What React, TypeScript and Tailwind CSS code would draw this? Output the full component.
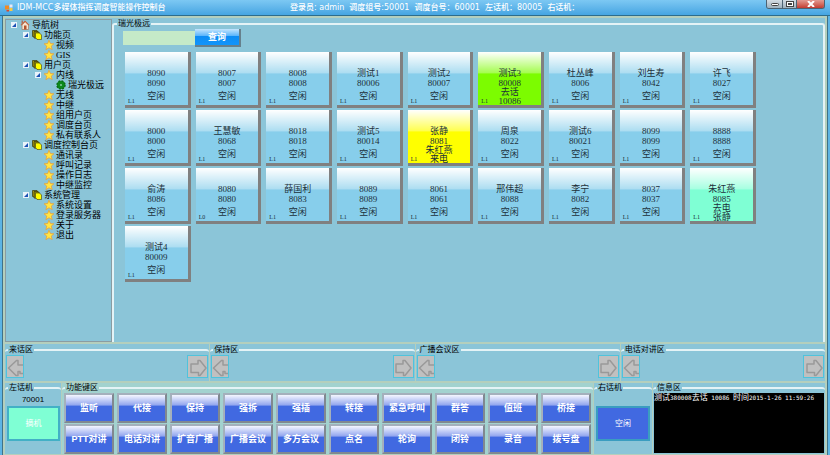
import React, { useState } from 'react';
import clsx from 'clsx';

type Status = 'idle' | 'calling' | 'ringing' | 'outgoing';

interface Extension {
    name: string;
    number: string;
    line?: string;
    status?: Status;
    state?: string[];
}

interface TreeNode {
    label: string;
    depth: number;
    icon: 'home' | 'page' | 'star' | 'gear';
    open?: boolean;
}

const tree: TreeNode[] = [
    { label: '导航树', depth: 0, icon: 'home', open: true },
    { label: '功能页', depth: 1, icon: 'page', open: true },
    { label: '视频', depth: 2, icon: 'star' },
    { label: 'GIS', depth: 2, icon: 'star' },
    { label: '用户页', depth: 1, icon: 'page', open: true },
    { label: '内线', depth: 2, icon: 'star', open: true },
    { label: '瑞光极远', depth: 3, icon: 'gear' },
    { label: '无线', depth: 2, icon: 'star' },
    { label: '中继', depth: 2, icon: 'star' },
    { label: '组用户页', depth: 2, icon: 'star' },
    { label: '调度台页', depth: 2, icon: 'star' },
    { label: '私有联系人', depth: 2, icon: 'star' },
    { label: '调度控制台页', depth: 1, icon: 'page', open: true },
    { label: '通讯录', depth: 2, icon: 'star' },
    { label: '呼叫记录', depth: 2, icon: 'star' },
    { label: '操作日志', depth: 2, icon: 'star' },
    { label: '中继监控', depth: 2, icon: 'star' },
    { label: '系统管理', depth: 1, icon: 'page', open: true },
    { label: '系统设置', depth: 2, icon: 'star' },
    { label: '登录服务器', depth: 2, icon: 'star' },
    { label: '关于', depth: 2, icon: 'star' },
    { label: '退出', depth: 2, icon: 'star' },
];

const extensions: Extension[] = [
    { name: '8090', number: '8090' },
    { name: '8007', number: '8007' },
    { name: '8008', number: '8008' },
    { name: '测试1', number: '80006' },
    { name: '测试2', number: '80007' },
    { name: '测试3', number: '80008', status: 'calling', state: ['去话', '10086'] },
    { name: '杜丛峰', number: '8006' },
    { name: '刘生寿', number: '8042' },
    { name: '许飞', number: '8027' },
    { name: '8000', number: '8000' },
    { name: '王慧敏', number: '8068' },
    { name: '8018', number: '8018' },
    { name: '测试5', number: '80014' },
    { name: '张静', number: '8081', status: 'ringing', state: ['朱红燕', '来电'] },
    { name: '周泉', number: '8022' },
    { name: '测试6', number: '80021' },
    { name: '8099', number: '8099' },
    { name: '8888', number: '8888' },
    { name: '俞涛', number: '8086' },
    { name: '8080', number: '8080', line: 'L0' },
    { name: '薛国利', number: '8083' },
    { name: '8089', number: '8089' },
    { name: '8061', number: '8061' },
    { name: '邢伟超', number: '8088' },
    { name: '李宁', number: '8082' },
    { name: '8037', number: '8037' },
    { name: '朱红燕', number: '8085', status: 'outgoing', state: ['去电', '张静'] },
    { name: '测试4', number: '80009' },
];

const functionKeys = [
    '监听', '代接', '保持', '强拆', '强插', '转接', '紧急呼叫', '群答', '值班', '桥接',
    'PTT对讲', '电话对讲', '扩音广播', '广播会议', '多方会议', '点名', '轮询', '闭铃', '录音', '拨号盘',
];

const indent = ['pl-[5px]', 'pl-[17px]', 'pl-[29px]', 'pl-[41px]'];

const statusColor: Record<Status, string> = {
    idle: 'bg-[#87ceeb]',
    calling: 'bg-[#7cfc00]',
    ringing: 'bg-[#ffff00]',
    outgoing: 'bg-[#7fffd4]',
};

function TreeIcon({ icon }: { icon: TreeNode['icon'] }) {
    return (
        <svg viewBox="0 0 20 20" className="h-[10px] w-[10px] shrink-0" aria-hidden="true">
            {icon === 'home' && (
                <>
                    <path d="M4 9v10h13V9l-6-6z" fill="#f6e4d0" stroke="#a4826a" strokeWidth="1.5" />
                    <path d="M1 10 10 1l9 9-2 1-7-7-7 7z" fill="#c4623c" />
                    <path d="M3 1h3v5L3 8z" fill="#b0705a" />
                    <path d="M8 11h5v8H8z" fill="#b4532c" />
                </>
            )}
            {icon === 'page' && (
                <>
                    <path d="M1 1h9l3 4v10L1 13z" fill="#b8ae10" stroke="#3c3a10" strokeWidth="1.5" />
                    <path d="M4 3h8l3 3v11l-11-1z" fill="#8a8410" stroke="#3c3a10" strokeWidth="1.5" />
                    <path d="M7 6h8l4 4v9H10l-3-4z" fill="#ffff00" stroke="#3c3a10" strokeWidth="1.2" />
                </>
            )}
            {icon === 'star' && (
                <path
                    d="M10 .5 12.800 7l7 .6-5.300 4.600 1.700 7L10 15.500l-6.200 3.700 1.700-7L.2 7.600l7-.6z"
                    fill="#ffe545"
                    stroke="#f09a28"
                    strokeWidth="1.300"
                />
            )}
            {icon === 'gear' && (
                <>
                    <circle cx="10" cy="10" r="8" fill="#0c8a1c" />
                    <circle cx="10" cy="10" r="8" fill="none" stroke="#0a6e16" strokeWidth="3" strokeDasharray="4 2.280" />
                    <circle cx="10" cy="10" r="2.200" fill="#7fc49a" />
                </>
            )}
        </svg>
    );
}

function Arrow({ dir, label }: { dir: 'left' | 'right'; label: string }) {
    return (
        <button
            type="button"
            aria-label={label}
            className={clsx(
                'flex h-[23px] items-center justify-center overflow-hidden border border-[#4fc3dc] bg-[#c0c0c0]',
                dir === 'left' ? 'w-[18px]' : 'w-[21px]'
            )}
        >
            <svg
                viewBox="0 0 18 20"
                className="h-[20px] w-[18px] shrink-0"
                fill="none"
                stroke="#999"
                strokeWidth="1.500"
                strokeLinejoin="round"
            >
                {dir === 'left' ? (
                    <path d="M18 8h-6V3.500h-1.500L2.500 11l7.500 7.500h2V14.500h2v2h4" />
                ) : (
                    <path d="M2 7h7V3.500h2L17 11l-6 7.500H9.500v-3H2z" />
                )}
            </svg>
        </button>
    );
}

function Group({ title, className, children }: { title: string; className?: string; children: React.ReactNode }) {
    return (
        <fieldset className={clsx('min-w-0 rounded-t-[3px] border-t-2 border-[#e4f3f6]', className)}>
            <legend className="ml-[3px] px-px text-[8px] leading-[10px] text-black">{title}</legend>
            {children}
        </fieldset>
    );
}

function ExtensionCard({ ext }: { ext: Extension }) {
    const status = ext.status ?? 'idle';
    return (
        <button
            type="button"
            className={clsx(
                'relative flex h-14 flex-col items-center border-r-[3px] border-b-[3px] border-[#808080] pt-4 text-[9px] leading-[9px] text-[#20303a]',
                'bg-[linear-gradient(rgba(255,255,255,1),rgba(255,255,255,0.3)_40%,transparent_41%)]',
                "font-['Liberation_Serif','Noto_Sans_CJK_SC',serif]",
                statusColor[status]
            )}
        >
            <span className="leading-[10px]">{ext.name}</span>
            <span className="leading-[10px]">{ext.number}</span>
            {ext.state ? ext.state.map(s => <span key={s}>{s}</span>) : <span className="mt-1">空闲</span>}
            <span className="absolute bottom-0 left-[3px] text-[6px] leading-[8px]">{ext.line ?? 'L1'}</span>
        </button>
    );
}

function TitleBar() {
    return (
        <header className="flex h-4 items-center border-b border-[#2d6d8c] bg-gradient-to-b from-[#7cc8f3] to-[#45a5e2] pl-[5px] text-[8px] font-medium leading-[14px] text-white">
            <div className="flex w-[285px] shrink-0 items-center gap-1">
                <svg viewBox="0 0 16 16" className="h-2 w-2" aria-hidden="true">
                    <path d="M0 3h8v8H0z" fill="#f08a24" />
                    <path d="M9 1h6v6H9z" fill="#e8e8f4" />
                    <path d="M9 8h6v6H9z" fill="#f6c944" />
                    <path d="M3 12h5v3H3z" fill="#d9482b" />
                </svg>
                <h1>IDM-MCC多媒体指挥调度智能操作控制台</h1>
            </div>
            <div className="flex flex-1 gap-[5px] whitespace-nowrap">
                <span>登录员: admin</span>
                <span>调度组号:50001</span>
                <span>调度台号：60001</span>
                <span>左话机：80005</span>
                <span>右话机：</span>
            </div>
            <div className="mr-[5px] flex h-[9px] self-start overflow-hidden rounded-b-[3px] border border-t-0 border-[#4c6272]">
                <button type="button" aria-label="最小化" className="flex w-4 items-center justify-center border-r border-[#4c6272] bg-gradient-to-b from-[#d4dde4] to-[#9fb0bc]">
                    <span className="h-[3px] w-2 rounded-xs border border-[#444] bg-white" />
                </button>
                <button type="button" aria-label="最大化" className="flex w-[14px] items-center justify-center border-r border-[#4c6272] bg-gradient-to-b from-[#d4dde4] to-[#9fb0bc]">
                    <span className="h-[6px] w-2 border border-[#444] bg-white p-px">
                        <span className="block h-[2px] border border-[#444]" />
                    </span>
                </button>
                <button type="button" aria-label="关闭" className="flex w-[27px] items-center justify-center bg-gradient-to-b from-[#e29a92] to-[#c23a30]">
                    <svg viewBox="0 0 8 6" className="h-[6px] w-2" stroke="#fff" strokeWidth="2">
                        <path d="m1 0 6 6M7 0 1 6" />
                    </svg>
                </button>
            </div>
        </header>
    );
}

export default function App() {
    const [query, setQuery] = useState('');

    return (
        <div className="flex min-h-screen w-full flex-col bg-[#5db4e4] font-['DejaVu_Sans','Noto_Sans_CJK_SC',sans-serif]">
            <TitleBar />
            <div className="mr-[2px] ml-[2px] flex flex-1 flex-col border-x border-[#3f7288] bg-[#b4cfbd] px-[2px] pt-[2px] pb-px">
                <div className="flex flex-1 bg-[#8bc5d8] pt-px">
                    <nav className="w-[107px] shrink-0 border border-[#8a9ca2]">
                        <ul>
                            {tree.map(node => (
                                <li key={node.label} className={clsx('flex h-[10px] items-center', indent[node.depth])}>
                                    <span className="flex w-[9px] shrink-0">
                                        {node.open && (
                                            <svg viewBox="0 0 6 6" className="h-[6px] w-[6px]" aria-hidden="true">
                                                <path d="M0 0h6v6H0z" fill="#e9f3fb" />
                                                <path d="M5 1v4H1z" fill="#1c50b4" />
                                            </svg>
                                        )}
                                    </span>
                                    <TreeIcon icon={node.icon} />
                                    <a
                                        href="#"
                                        className="ml-[2px] whitespace-nowrap font-['Liberation_Serif','Noto_Sans_CJK_SC',serif] text-[9px] leading-[10px] text-black"
                                    >
                                        {node.label}
                                    </a>
                                </li>
                            ))}
                        </ul>
                    </nav>

                    <Group title="瑞光极远" className="flex-1 border-x-2">
                        <div className="flex pl-[9px]">
                            <input
                                type="text"
                                aria-label="查询号码"
                                value={query}
                                onChange={e => setQuery(e.target.value)}
                                className="mt-[2px] h-[14px] w-[72px] bg-[#c5eac8] px-1 text-[9px] outline-none"
                            />
                            <button
                                type="button"
                                className="h-[18px] w-[46px] border-r-2 border-b-2 border-[#66808c] bg-[linear-gradient(#c4e5fd,#54b2fb_45%,#0c8cf4_46%,#1295fa)] text-[9px] font-bold leading-[14px] text-white"
                            >
                                查询
                            </button>
                        </div>
                        <div className="mt-[5px] grid grid-cols-9 gap-x-[5px] gap-y-[2px] pr-[67px] pl-[11px]">
                            {extensions.map(ext => (
                                <ExtensionCard key={ext.number} ext={ext} />
                            ))}
                        </div>
                    </Group>
                </div>

                <div className="mt-[2px] grid grid-cols-4 gap-px">
                    {['来话区', '保持区', '广播会议区', '电话对讲区'].map(title => (
                        <div key={title} className="bg-[#8bc5d8] pt-px">
                            <Group title={title}>
                                <div className="flex justify-between px-px pb-[3px]">
                                    <Arrow dir="left" label={`${title}上一页`} />
                                    <Arrow dir="right" label={`${title}下一页`} />
                                </div>
                            </Group>
                        </div>
                    ))}
                </div>

                <div className="mt-[2px] flex gap-px">
                    <div className="w-14 shrink-0 bg-[#8bc5d8]">
                        <Group title="左话机">
                            <p className="text-center font-['Liberation_Sans',sans-serif] text-[8px] leading-[13px] text-black">70001</p>
                            <button
                                type="button"
                                className="mx-[2px] h-[35px] w-[53px] border-2 border-[#42b0c6] bg-[#7fffd4] text-[8px] text-white"
                            >
                                摘机
                            </button>
                        </Group>
                    </div>
                    <div className="min-w-0 flex-1 bg-[#a2d2cf]">
                        <Group title="功能键区">
                            <div className="grid grid-cols-10 gap-x-[3px] gap-y-px px-[2px]">
                                {functionKeys.map(key => (
                                    <button
                                        key={key}
                                        type="button"
                                        className="h-[30px] whitespace-nowrap border-2 border-[#808890] border-t-[#a4b0bc] border-l-[#a4b0bc] bg-[linear-gradient(#f4f6ff,#8fa3ee_40%,#4169e1_41%)] font-['Liberation_Sans','Noto_Sans_CJK_SC',sans-serif] text-[9px] font-bold leading-[10px] text-white"
                                    >
                                        {key}
                                    </button>
                                ))}
                            </div>
                        </Group>
                    </div>
                    <div className="w-[58px] shrink-0 bg-[#8bc5d8]">
                        <Group title="右话机">
                            <button
                                type="button"
                                className="mx-[2px] mt-[13px] h-[35px] w-[54px] border-2 border-[#3a9dc0] bg-[#4169e1] text-[8px] text-white"
                            >
                                空闲
                            </button>
                        </Group>
                    </div>
                    <div className="w-[172px] shrink-0 bg-[#8bc5d8]">
                        <Group title="信息区">
                            <div
                                role="log"
                                className="mx-px h-[60px] bg-black whitespace-nowrap font-['DejaVu_Sans_Mono','Noto_Sans_CJK_SC',monospace] text-[6px] leading-[9px] text-white"
                            >
                                <span className="text-[8px]">测试</span>380008<span className="text-[8px]">去话</span> 10086{' '}
                                <span className="text-[8px]">时间</span>2015-1-26 11:59:26
                            </div>
                        </Group>
                    </div>
                </div>
            </div>
        </div>
    );
}
